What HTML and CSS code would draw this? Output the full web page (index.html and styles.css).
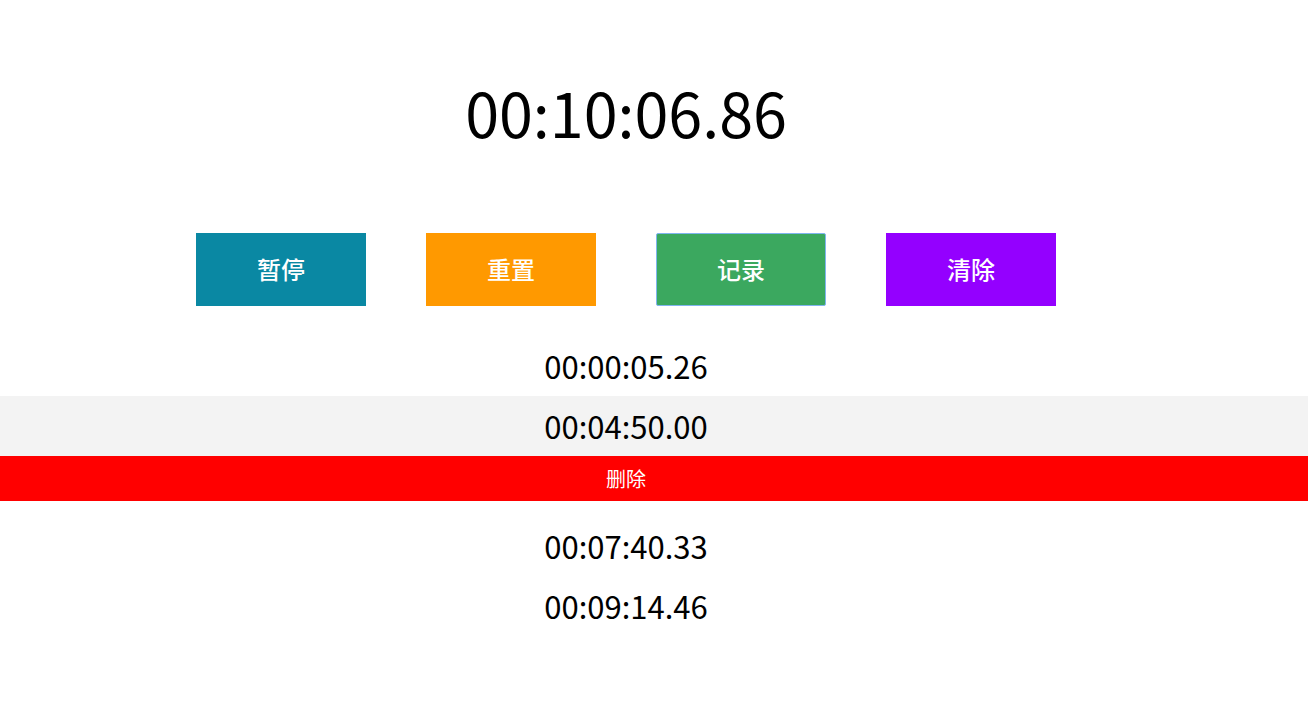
FILE: index.html
```html
<!DOCTYPE html>
<html lang="zh">
<head>
<meta charset="utf-8">
<title>秒表</title>
<link rel="stylesheet" href="styles.css">
</head>
<body>
<div class="clock">00:10:06.86</div>
<div class="controls">
  <button class="btn btn-pause">暂停</button>
  <button class="btn btn-reset">重置</button>
  <button class="btn btn-record">记录</button>
  <button class="btn btn-clear">清除</button>
</div>
<ul class="laps">
  <li class="lap">00:00:05.26</li>
  <li class="lap lap-active">00:04:50.00</li>
  <li class="lap-delete"><span class="delete-btn">删除</span></li>
  <li class="lap">00:07:40.33</li>
  <li class="lap">00:09:14.46</li>
</ul>
</body>
</html>
```
FILE: styles.css
```css
html, body {
  margin: 0;
  padding: 0;
  background: #ffffff;
}
body {
  font-family: "Noto Sans CJK SC", "Noto Sans", sans-serif;
  color: #000000;
}
.clock {
  padding: 76px 56px 0 0;
  height: 72px;
  font-size: 61px;
  line-height: 72px;
  text-align: center;
}
.controls {
  display: flex;
  justify-content: center;
  gap: 60px;
  margin-top: 85px;
  padding-right: 56px;
}
.btn {
  width: 170px;
  height: 73px;
  border: none;
  margin: 0;
  padding: 0 0 2px 0;
  font-family: inherit;
  font-size: 24px;
  font-weight: 500;
  color: #ffffff;
  cursor: pointer;
}
.btn-pause { background: #0a88a3; }
.btn-reset { background: #ff9900; }
.btn-record {
  background: #3ba85f;
  border: 1px solid #80b4ef;
  border-radius: 2px;
}
.btn-clear { background: #9400ff; }
.laps {
  list-style: none;
  margin: 30px 0 0 0;
  padding: 0;
}
.lap {
  height: 60px;
  line-height: 60px;
  font-size: 31px;
  text-align: center;
  padding-right: 56px;
}
.lap-active { background: #f3f3f3; }
.lap-delete {
  height: 60px;
}
.delete-btn {
  display: block;
  height: 45px;
  line-height: 45px;
  background: #ff0000;
  color: #ffffff;
  font-size: 20px;
  text-align: center;
  padding-right: 56px;
}
```
